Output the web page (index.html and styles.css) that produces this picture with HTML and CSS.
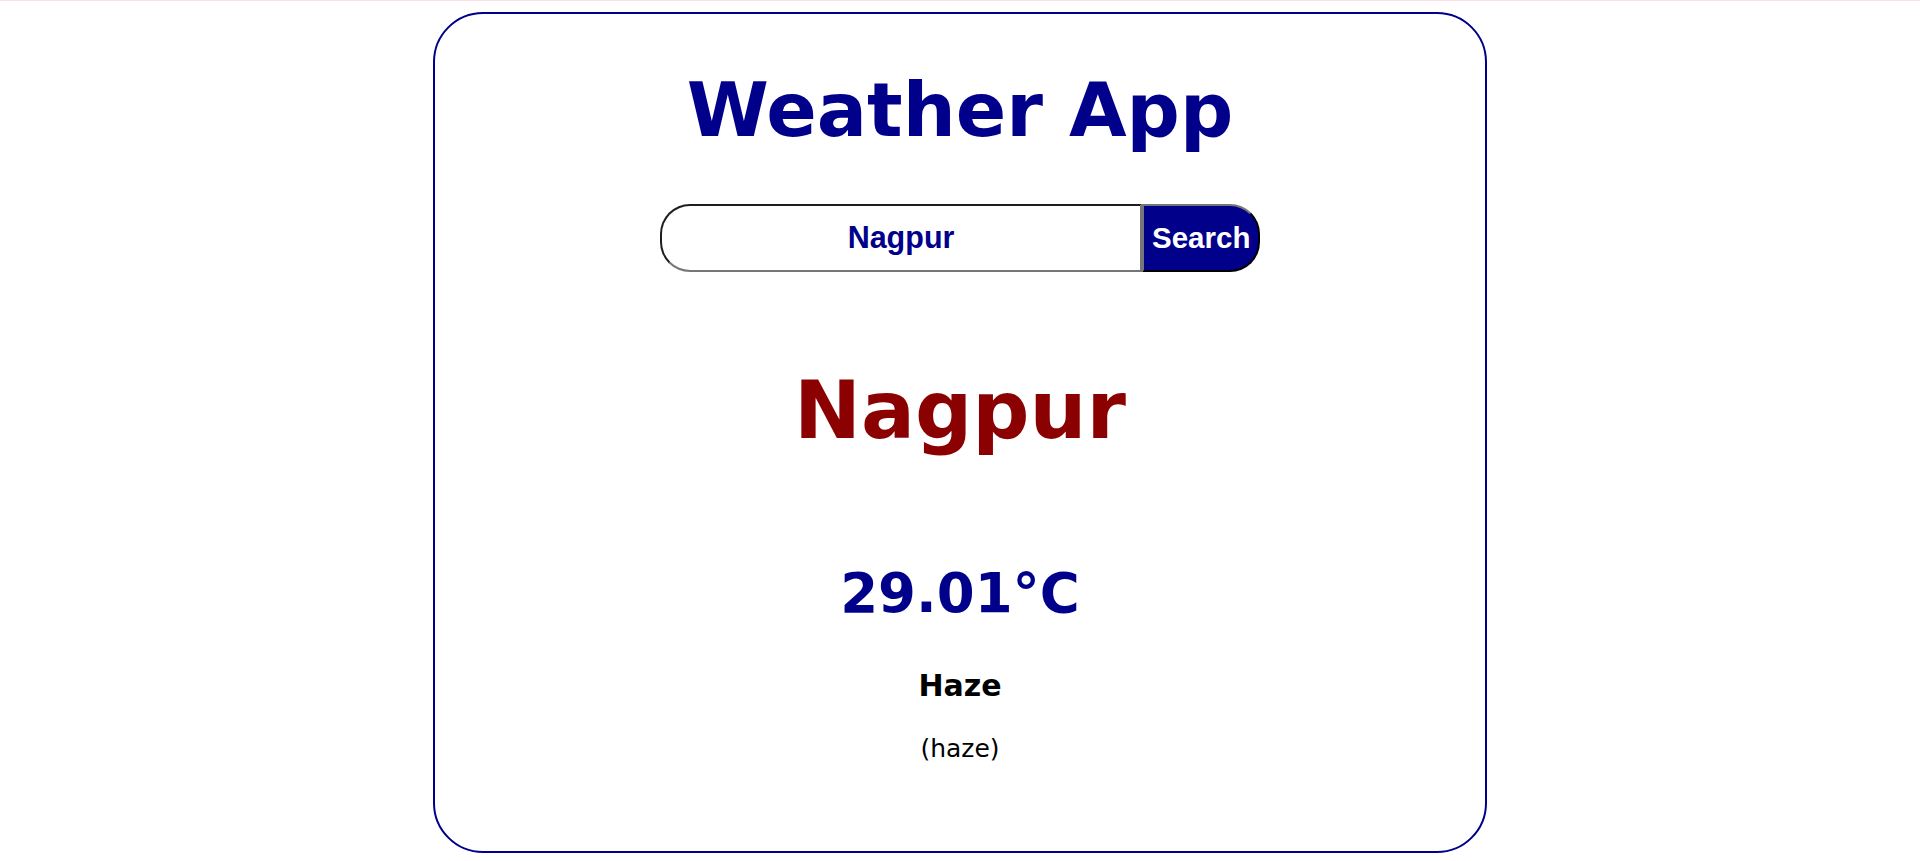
FILE: index.html
```html
<!DOCTYPE html>
<html lang="en">
<head>
<meta charset="utf-8">
<title>Weather App</title>
<link rel="stylesheet" href="styles.css">
</head>
<body>
<div class="topline"></div>
<main class="card">
  <h1 class="title">Weather App</h1>
  <div class="search">
    <input class="search-input" type="text" value="Nagpur">
    <button class="search-btn" type="button">Search</button>
  </div>
  <h2 class="city">Nagpur</h2>
  <div class="temp">29.01°C</div>
  <div class="main">Haze</div>
  <div class="desc">(haze)</div>
</main>
</body>
</html>
```

FILE: styles.css
```css
html, body {
  margin: 0;
  padding: 0;
  background: #ffffff;
}

body {
  font-family: "DejaVu Sans", Verdana, sans-serif;
}

.topline {
  height: 1px;
  background: #ffdfe6;
}

.card {
  box-sizing: border-box;
  width: 1054px;
  height: 841px;
  margin: 11px auto 0;
  border: 2px solid #00008b;
  border-radius: 50px;
  display: flex;
  flex-direction: column;
  align-items: center;
  padding-top: 60px;
}

.title {
  margin: 0;
  font-size: 74.5px;
  line-height: 74.5px;
  font-weight: bold;
  color: #00008b;
}

.search {
  display: flex;
  width: 600px;
  height: 68px;
  margin-top: 55px;
}

.search-input {
  flex: 1;
  min-width: 0;
  box-sizing: border-box;
  height: 68px;
  margin: 0;
  padding: 0 10px;
  border-style: solid;
  border-width: 2px;
  border-color: #1e1e1e #767676 #767676 #1e1e1e;
  border-radius: 30px 0 0 30px;
  font-family: "Liberation Sans", Arial, sans-serif;
  font-size: 30.5px;
  font-weight: bold;
  color: #00008b;
  text-align: center;
  background: #fff;
  outline: none;
}

.search-btn {
  box-sizing: border-box;
  height: 68px;
  width: 118px;
  margin: 0;
  padding: 0 4px 0 8px;
  border-style: solid;
  border-width: 2px;
  border-color: #767676 #000000 #000000 #767676;
  border-radius: 0 30px 30px 0;
  background: #00008b;
  color: #ffffff;
  font-family: "Liberation Sans", Arial, sans-serif;
  font-size: 29.5px;
  font-weight: bold;
  text-align: left;
  white-space: nowrap;
}

.city {
  margin: 99px 0 0;
  font-size: 80px;
  line-height: 80px;
  font-weight: bold;
  color: #8b0000;
}

.temp {
  margin-top: 115px;
  font-size: 54.5px;
  line-height: 54.5px;
  font-weight: bold;
  color: #00008b;
}

.main {
  margin-top: 51px;
  font-size: 30px;
  line-height: 30px;
  font-weight: bold;
  color: #000000;
}

.desc {
  margin-top: 35px;
  font-size: 25px;
  line-height: 25px;
  color: #000000;
}
```
